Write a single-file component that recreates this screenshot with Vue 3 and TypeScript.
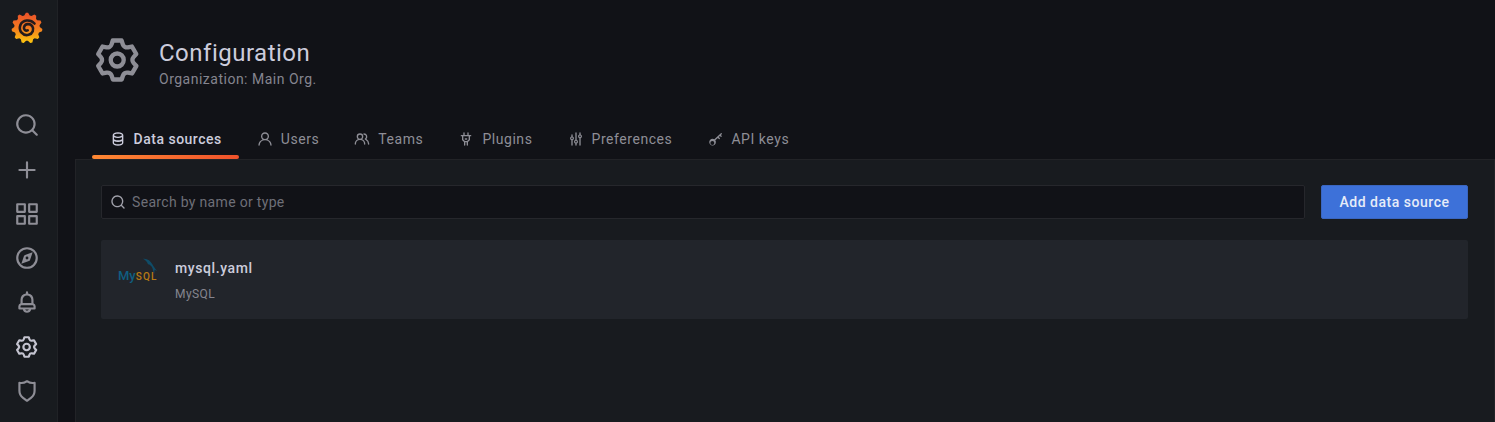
<script setup lang="ts">
const cog =
  'M19.9,12.66a1,1,0,0,1,0-1.32L21.18,9.9a1,1,0,0,0,.12-1.17l-2-3.46a1,1,0,0,0-1.07-.48l-1.88.38a1,1,0,0,1-1.15-.66l-.61-1.83A1,1,0,0,0,13.64,2h-4a1,1,0,0,0-1,.68L8.08,4.51a1,1,0,0,1-1.15.66L5,4.79A1,1,0,0,0,4,5.27L2,8.73A1,1,0,0,0,2.1,9.9l1.27,1.44a1,1,0,0,1,0,1.32L2.1,14.1A1,1,0,0,0,2,15.27l2,3.46a1,1,0,0,0,1.07.48l1.88-.38a1,1,0,0,1,1.15.66l.61,1.83a1,1,0,0,0,1,.68h4a1,1,0,0,0,.95-.68l.61-1.83a1,1,0,0,1,1.15-.66l1.88.38a1,1,0,0,0,1.07-.48l2-3.46a1,1,0,0,0-.12-1.17ZM18.41,14l.8.9-1.28,2.22-1.18-.24a3,3,0,0,0-3.45,2L12.92,20H10.36L10,18.86a3,3,0,0,0-3.45-2l-1.18.24L4.07,14.89l.8-.9a3,3,0,0,0,0-4l-.8-.9L5.35,6.89l1.18.24a3,3,0,0,0,3.45-2L10.36,4h2.56l.38,1.14a3,3,0,0,0,3.45,2l1.18-.24,1.28,2.22-.8.9A3,3,0,0,0,18.41,14ZM11.64,8a4,4,0,1,0,4,4A4,4,0,0,0,11.64,8Zm0,6a2,2,0,1,1,2-2A2,2,0,0,1,11.64,14Z'
const search =
  'M21.71,20.29,18,16.61A9,9,0,1,0,16.61,18l3.68,3.68a1,1,0,0,0,1.42,0A1,1,0,0,0,21.71,20.29ZM11,18a7,7,0,1,1,7-7A7,7,0,0,1,11,18Z'

const sideIcons: { name: string; d: string }[] = [
  { name: 'search', d: search },
  { name: 'plus', d: 'M19,11H13V5a1,1,0,0,0-2,0v6H5a1,1,0,0,0,0,2h6v6a1,1,0,0,0,2,0V13h6a1,1,0,0,0,0-2Z' },
  {
    name: 'apps',
    d: 'M10,13H3a1,1,0,0,0-1,1v7a1,1,0,0,0,1,1h7a1,1,0,0,0,1-1V14A1,1,0,0,0,10,13ZM9,20H4V15H9ZM21,2H14a1,1,0,0,0-1,1v7a1,1,0,0,0,1,1h7a1,1,0,0,0,1-1V3A1,1,0,0,0,21,2ZM20,9H15V4h5Zm1,4H14a1,1,0,0,0-1,1v7a1,1,0,0,0,1,1h7a1,1,0,0,0,1-1V14A1,1,0,0,0,21,13Zm-1,7H15V15h5ZM10,2H3A1,1,0,0,0,2,3v7a1,1,0,0,0,1,1h7a1,1,0,0,0,1-1V3A1,1,0,0,0,10,2ZM9,9H4V4H9Z',
  },
  {
    name: 'compass',
    d: 'M12,2A10,10,0,1,0,22,12,10,10,0,0,0,12,2Zm0,18a8,8,0,1,1,8-8A8,8,0,0,1,12,20ZM17.2,6.800l-7,2.400a1.600,1.600,0,0,0-1,1L6.800,17.200l7-2.400a1.600,1.600,0,0,0,1-1ZM12,13.300A1.300,1.300,0,1,1,13.300,12,1.300,1.300,0,0,1,12,13.300Z',
  },
  {
    name: 'bell',
    d: 'M18,13.18V10a6,6,0,0,0-5-5.91V3a1,1,0,0,0-2,0V4.09A6,6,0,0,0,6,10v3.18A3,3,0,0,0,4,16v2a1,1,0,0,0,1,1H8.14a4,4,0,0,0,7.72,0H19a1,1,0,0,0,1-1V16A3,3,0,0,0,18,13.18ZM8,10a4,4,0,0,1,8,0v3H8Zm4,10a2,2,0,0,1-1.72-1h3.44A2,2,0,0,1,12,20Zm6-3H6V16a1,1,0,0,1,1-1H17a1,1,0,0,1,1,1Z',
  },
  { name: 'cog', d: cog },
  {
    name: 'shield',
    d: 'M19.63,3.65a1,1,0,0,0-.84-.2,8,8,0,0,1-6.22-1.27,1,1,0,0,0-1.14,0A8,8,0,0,1,5.21,3.45a1,1,0,0,0-.84.2A1,1,0,0,0,4,4.43v7.45a9,9,0,0,0,3.77,7.33l3.65,2.6a1,1,0,0,0,1.16,0l3.65-2.6A9,9,0,0,0,20,11.88V4.43A1,1,0,0,0,19.63,3.65ZM18,11.88a7,7,0,0,1-2.93,5.7L12,19.77,8.93,17.58A7,7,0,0,1,6,11.88V5.58a10,10,0,0,0,6-1.39,10,10,0,0,0,6,1.39Z',
  },
]

const tabs: { label: string; d: string; active?: boolean }[] = [
  {
    label: 'Data sources',
    active: true,
    d: 'M12,2C7.6,2,4,3.8,4,6V18c0,2.2,3.6,4,8,4s8-1.8,8-4V6C20,3.8,16.4,2,12,2Zm6,16c0,.7-2.3,2-6,2s-6-1.3-6-2V15.4A13,13,0,0,0,12,16.6a13,13,0,0,0,6-1.2ZM18,12c0,.7-2.3,2-6,2s-6-1.3-6-2V9.4A13,13,0,0,0,12,10.6a13,13,0,0,0,6-1.2ZM12,8.6C8.3,8.6,6,6.9,6,6s2.3-2,6-2,6,1.1,6,2S15.7,8.6,12,8.6Z',
  },
  {
    label: 'Users',
    d: 'M15.71,12.71a6,6,0,1,0-7.42,0,10,10,0,0,0-6.22,8.18,1,1,0,0,0,2,.22,8,8,0,0,1,15.9,0,1,1,0,0,0,1,.89h.11a1,1,0,0,0,.88-1.1A10,10,0,0,0,15.71,12.71ZM12,12a4,4,0,1,1,4-4A4,4,0,0,1,12,12Z',
  },
  {
    label: 'Teams',
    d: 'M12.3,12.22A4.92,4.92,0,0,0,14,8.5a5,5,0,0,0-10,0,4.92,4.92,0,0,0,1.7,3.72A8,8,0,0,0,1,19.5a1,1,0,0,0,2,0,6,6,0,0,1,12,0,1,1,0,0,0,2,0A8,8,0,0,0,12.3,12.22ZM9,11.5a3,3,0,1,1,3-3A3,3,0,0,1,9,11.5Zm9.74.32A5,5,0,0,0,15,3.5a1,1,0,0,0,0,2,3,3,0,0,1,3,3,3,3,0,0,1-1.5,2.59,1,1,0,0,0-.5.84,1,1,0,0,0,.45.86l.39.26.13.07a7,7,0,0,1,4,6.38,1,1,0,0,0,2,0A9,9,0,0,0,18.74,11.82Z',
  },
  {
    label: 'Plugins',
    d: 'M19,6H16V3a1,1,0,0,0-2,0V6H10V3A1,1,0,0,0,8,3V6H5A1,1,0,0,0,5,8H6v5a1,1,0,0,0,.29.71L9,16.41V21a1,1,0,0,0,2,0V17h2v4a1,1,0,0,0,2,0V16.41l2.71-2.7A1,1,0,0,0,18,13V8h1a1,1,0,0,0,0-2ZM16,12.59,13.59,15H10.41L8,12.59V8h8ZM11,13h2a1,1,0,0,0,0-2H11a1,1,0,0,0,0,2Z',
  },
  {
    label: 'Preferences',
    d: 'M7,6a1,1,0,0,0-2,0v2.18a3,3,0,0,0,0,5.64V21a1,1,0,0,0,2,0V13.82a3,3,0,0,0,0-5.64ZM6,12.2a1.2,1.2,0,1,1,1.2-1.2A1.2,1.2,0,0,1,6,12.2ZM13,3a1,1,0,0,0-2,0V13.18a3,3,0,0,0,0,5.64V21a1,1,0,0,0,2,0V18.82a3,3,0,0,0,0-5.64ZM12,17.2A1.2,1.2,0,1,1,13.2,16,1.2,1.2,0,0,1,12,17.2ZM21,8a3,3,0,0,0-2-2.82V3a1,1,0,0,0-2,0V5.18a3,3,0,0,0,0,5.64V21a1,1,0,0,0,2,0V10.82A3,3,0,0,0,21,8ZM18,9.2A1.2,1.2,0,1,1,19.2,8,1.2,1.2,0,0,1,18,9.2Z',
  },
  {
    label: 'API keys',
    d: 'M22.2,4.700a1,1,0,0,0-1.400-1.400L11.100,12.500a5,5,0,1,0,1.400,1.400L16.200,10.400l1.600,1.600a1,1,0,0,0,1.400-1.400L17.600,9,19.300,7.400l1.200,1.200a1,1,0,0,0,1.400-1.400L20.700,6ZM8,21a3,3,0,1,1,3-3A3,3,0,0,1,8,21Z',
  },
]

// Grafana cog outline: alternate outer and inner radii around the centre.
const teeth = 11
const logoPoints = Array.from({ length: teeth * 4 }, (_, i) => {
  const a = ((i - 0.5) / (teeth * 4)) * Math.PI * 2 - Math.PI / 2
  const r = i % 4 < 2 ? 15.400 : 12.800
  return `${(16 + r * Math.cos(a)).toFixed(2)},${(16 + r * Math.sin(a)).toFixed(2)}`
}).join(' ')
</script>

<template>
  <div class="shell">
    <nav class="side">
      <div class="logo">
        <svg width="32" height="32" viewBox="0 0 32 32">
          <defs>
            <linearGradient id="gf" x1="0" y1="1" x2="0" y2="0">
              <stop offset="0" stop-color="#fcc70e" />
              <stop offset="0.5" stop-color="#f47a20" />
              <stop offset="1" stop-color="#e9502a" />
            </linearGradient>
          </defs>
          <polygon :points="logoPoints" fill="url(#gf)" />
          <path
            d="M23.500 11.500C19.500 7 11.500 7.500 9.300 13.200C7.300 18.800 12 24.300 17.600 22.800C21.800 21.700 23.300 17.200 21.200 14.100C19 11.300 14 11.300 13 15.200C12.500 17.500 14.500 19.200 16.700 18.400"
            fill="none"
            stroke="#241a1c"
            stroke-width="2.600"
            stroke-linecap="round"
          />
        </svg>
      </div>
      <ul class="side-list">
        <li v-for="i in sideIcons" :key="i.name" class="side-item" :class="'side-' + i.name">
          <svg class="side-icon" :class="{ bright: i.name === 'cog' }" viewBox="0 0 24 24" width="26" height="26">
            <path :d="i.d" />
          </svg>
        </li>
      </ul>
    </nav>

    <main class="main">
      <header class="head">
        <div class="title-row">
          <svg class="head-icon" viewBox="0 0 24 24" width="52" height="52"><path :d="cog" /></svg>
          <div class="titles">
            <h1 class="title">Configuration</h1>
            <div class="sub">Organization: Main Org.</div>
          </div>
        </div>
        <ul class="tabs">
          <li v-for="t in tabs" :key="t.label" class="tab" :class="{ active: t.active }">
            <svg class="tab-icon" viewBox="0 0 24 24" width="16" height="16"><path :d="t.d" /></svg>
            <span>{{ t.label }}</span>
          </li>
        </ul>
      </header>

      <section class="panel">
        <div class="toolbar">
          <label class="search">
            <svg class="search-icon" viewBox="0 0 24 24" width="16" height="16"><path :d="search" /></svg>
            <input class="search-input" type="text" placeholder="Search by name or type" />
          </label>
          <button class="add" type="button">Add data source</button>
        </div>
        <article class="card">
          <div class="mysql">
            <svg class="dolphin" viewBox="0 0 16 18" width="16" height="18">
              <path
                d="M1 .8C5 .2 8.500 2.600 10.500 6.500c1 2.100 2.500 4 4.500 6.500l-2.400-1.300-.3 4.300c-.9-2.100-1.300-3.800-1.600-5.300C9.700 7.800 7.600 6.500 6 6.300 5.200 4 3.300 2 1 .8Z"
                fill="#0f4c68"
              />
            </svg>
            <span class="mysql-text"><span class="my">My</span><span class="sql">SQL</span></span>
          </div>
          <div class="card-text">
            <div class="card-name">mysql.yaml</div>
            <div class="card-type">MySQL</div>
          </div>
        </article>
      </section>
    </main>
  </div>
</template>

<style>
html,
body {
  margin: 0;
  background: #111217;
  overflow: hidden;
}
</style>

<style scoped>
.shell {
  display: flex;
  height: 422px;
  overflow: hidden;
  font-family: Roboto, "Liberation Sans", sans-serif;
  font-size: 14px;
  letter-spacing: 0.5px;
  color: #ccccdc;
  background: #111217;
}
.side {
  width: 54px;
  padding-right: 3px;
  flex: none;
  background: #181b1f;
  border-right: 1px solid #202226;
}
.logo {
  height: 56px;
  display: flex;
  align-items: center;
  justify-content: center;
}
.side-list {
  list-style: none;
  margin: 45.300px 0 0;
  padding: 0;
}
.side-item {
  height: 44.200px;
  display: flex;
  align-items: center;
  justify-content: center;
}
.side-item.side-search {
  height: 46.500px;
}
.side-icon {
  fill: #8e8e96;
}
.side-icon.bright {
  fill: #c4c4d0;
}
.main {
  flex: 1;
  min-width: 0;
  padding-left: 17px;
  display: flex;
  flex-direction: column;
}
.head {
  padding: 34px 0 0 17px;
}
.title-row {
  display: flex;
  align-items: flex-start;
  gap: 15px;
  height: 86px;
}
.head-icon {
  fill: #8e8e96;
  flex: none;
}
.titles {
  padding-top: 3px;
}
.title {
  margin: 0;
  font-size: 24px;
  font-weight: 400;
  line-height: 32px;
  color: #ccccdc;
}
.sub {
  font-size: 14px;
  line-height: 18px;
  color: #85858f;
  margin-top: 1px;
}
.tabs {
  list-style: none;
  display: flex;
  margin: 0;
  padding: 0;
  height: 39px;
}
.tab {
  position: relative;
  display: flex;
  align-items: center;
  gap: 8px;
  padding: 0 17.550px 2px;
  color: #8e8e96;
  letter-spacing: 0.550px;
}
.tab-icon {
  fill: currentColor;
  flex: none;
}
.tab.active {
  color: #ccccdc;
  font-weight: 500;
  letter-spacing: 0.500px;
}
.tab.active::after {
  content: "";
  position: absolute;
  left: 0;
  right: 0;
  bottom: 0;
  height: 4px;
  border-radius: 2px;
  background: linear-gradient(90deg, #ff8833, #f0522b);
}
.panel {
  flex: 1;
  background: #181b1f;
  border-top: 1px solid #222327;
  border-left: 1px solid #222327;
  border-right: 1px solid #222327;
  padding: 25px 26px 0 25px;
}
.toolbar {
  display: flex;
  gap: 16px;
  height: 34px;
}
.search {
  flex: 1;
  display: flex;
  align-items: center;
  gap: 6px;
  padding: 0 8px;
  background: #111217;
  border: 1px solid #26272c;
  border-radius: 2px;
  color: #8e8e96;
}
.search-icon {
  fill: #a0a0aa;
  flex: none;
}
.search-input {
  flex: 1;
  min-width: 0;
  background: none;
  border: 0;
  outline: 0;
  padding: 0;
  font: inherit;
  letter-spacing: 0.320px;
  color: #ccccdc;
}
.search-input::placeholder {
  color: #6e6f78;
  opacity: 1;
}
.add {
  width: 147px;
  flex: none;
  border: 1px solid #3a66c0;
  border-radius: 2px;
  background: #3d71d9;
  color: #e6ecf8;
  font: inherit;
  font-weight: 500;
  letter-spacing: 0.530px;
  padding: 0;
}
.card {
  margin-top: 21px;
  height: 79px;
  display: flex;
  align-items: center;
  background: #22252b;
  border-radius: 2px;
  padding-left: 16px;
}
.mysql {
  position: relative;
  width: 42px;
  height: 40px;
  flex: none;
  margin-right: 16px;
}
.dolphin {
  position: absolute;
  left: 25px;
  top: -2px;
}
.mysql-text {
  position: absolute;
  left: 1px;
  top: 8px;
  line-height: 14px;
  letter-spacing: 0;
  white-space: nowrap;
}
.my {
  font-size: 13px;
  font-weight: 500;
  color: #0f5e80;
}
.sql {
  font-size: 10px;
  font-weight: 500;
  letter-spacing: 1.200px;
  color: #b87a14;
}
.card-text {
  display: flex;
  flex-direction: column;
  gap: 9px;
  padding-top: 2px;
}
.card-name {
  font-weight: 500;
  letter-spacing: 0.600px;
  line-height: 18px;
  color: #ccccdc;
}
.card-type {
  font-size: 12px;
  letter-spacing: 0.400px;
  line-height: 16px;
  color: #85858f;
}
</style>
